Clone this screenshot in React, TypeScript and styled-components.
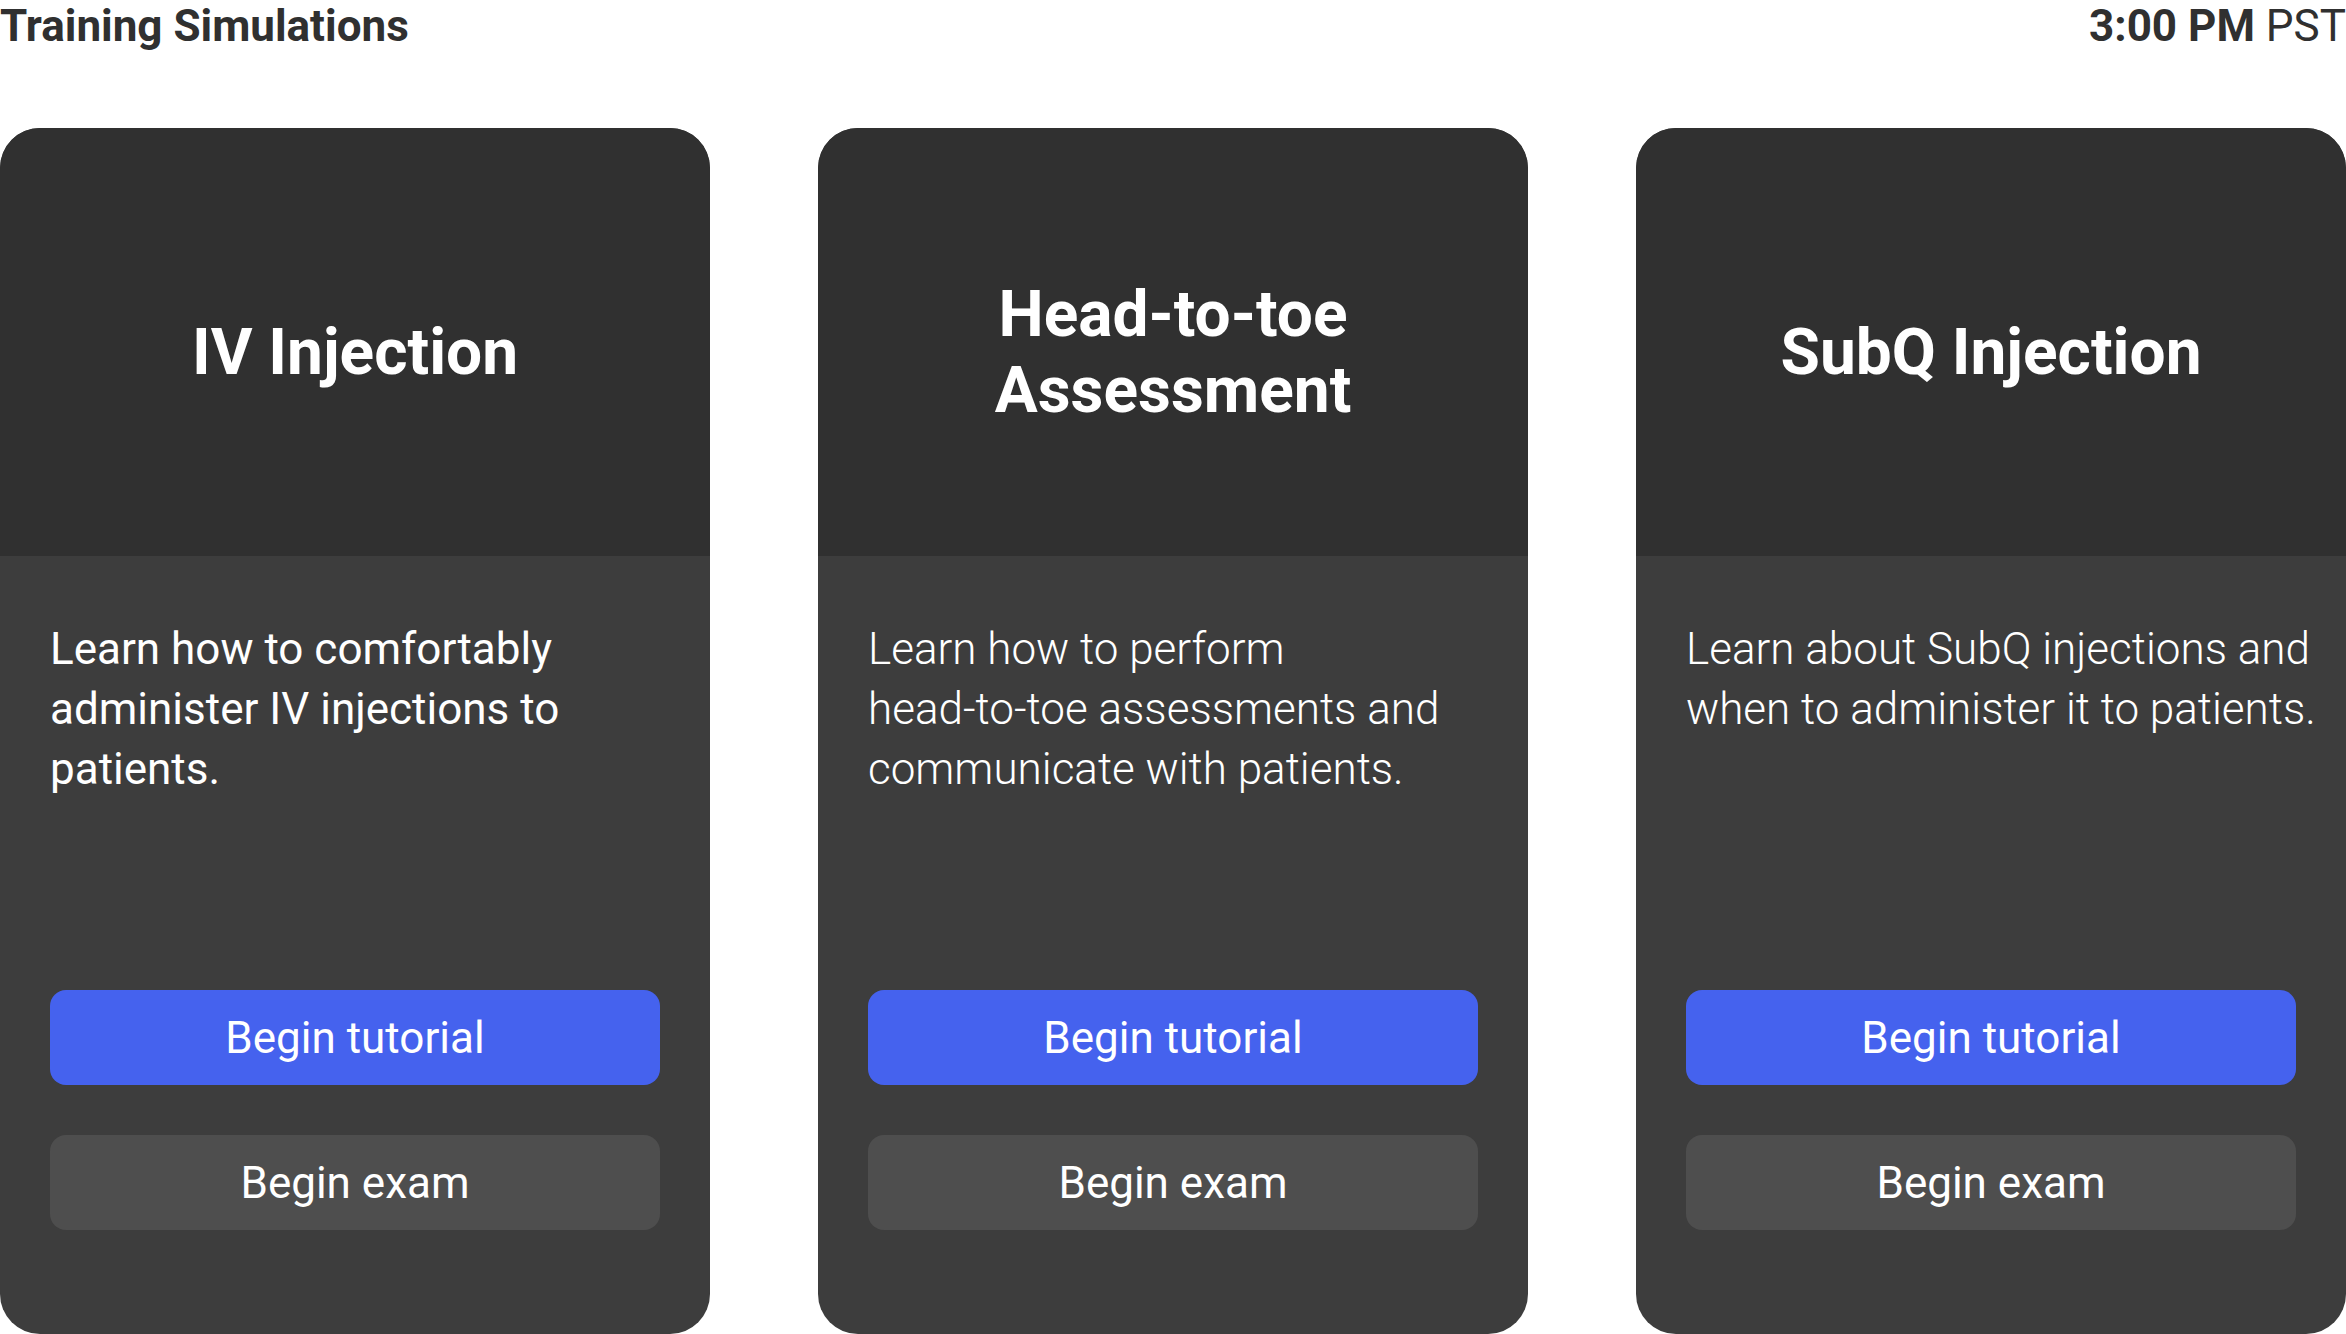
import React from "react";
import styled, { createGlobalStyle } from "styled-components";

const GlobalStyle = createGlobalStyle`
  html, body {
    margin: 0;
    padding: 0;
    background: #ffffff;
    font-family: Roboto, "Liberation Sans", Arial, sans-serif;
  }
  * {
    box-sizing: border-box;
  }
`;

const Page = styled.div`
  width: 2346px;
  height: 1334px;
  display: flex;
  flex-direction: column;
  overflow: hidden;
`;

const TopBar = styled.header`
  display: flex;
  justify-content: space-between;
  align-items: flex-start;
  height: 128px;
  font-size: 44px;
  line-height: 52px;
  color: #303030;
`;

const PageTitle = styled.h1`
  margin: 0;
  font-size: 44px;
  font-weight: 700;
  line-height: 52px;
`;

const Clock = styled.div`
  font-weight: 400;

  b {
    font-weight: 700;
  }
`;

const CardGrid = styled.div`
  flex: 1;
  display: grid;
  grid-template-columns: repeat(3, 1fr);
  gap: 108px;
`;

const Card = styled.section`
  display: flex;
  flex-direction: column;
  border-radius: 40px;
  overflow: hidden;
  background: #3d3d3d;
`;

const CardHead = styled.div`
  height: 428px;
  display: flex;
  align-items: center;
  justify-content: center;
  background: #303030;
  padding: 22px 40px 0;
`;

const CardTitle = styled.h2`
  margin: 0;
  color: #ffffff;
  font-size: 64px;
  font-weight: 700;
  line-height: 76px;
  text-align: center;
`;

const CardBody = styled.div`
  flex: 1;
  display: flex;
  flex-direction: column;
  padding: 63px 24px 104px 50px;
`;

const Description = styled.p<{ $weight: number }>`
  margin: 0;
  color: #ffffff;
  font-size: 44px;
  line-height: 60px;
  font-weight: ${(p) => p.$weight};
`;

const Actions = styled.div`
  margin-top: auto;
  margin-right: 26px;
  display: flex;
  flex-direction: column;
  gap: 50px;
`;

const ActionButton = styled.button<{ $primary?: boolean }>`
  height: 95px;
  border: none;
  border-radius: 16px;
  background: ${(p) => (p.$primary ? "#4562ee" : "#4e4e4e")};
  color: #ffffff;
  font-family: Roboto, "Liberation Sans", Arial, sans-serif;
  font-size: 44px;
  font-weight: 400;
  cursor: pointer;
`;

const simulations = [
  {
    title: "IV Injection",
    text: "Learn how to comfortably administer IV injections to patients.",
    weight: 400,
  },
  {
    title: (
      <>
        Head-to-toe
        <br />
        Assessment
      </>
    ),
    text: (
      <>
        Learn how to perform
        <br />
        head-to-toe assessments and communicate with patients.
      </>
    ),
    weight: 300,
  },
  {
    title: "SubQ Injection",
    text: "Learn about SubQ injections and when to administer it to patients.",
    weight: 300,
  },
];

const App = () => {
  return (
    <>
      <GlobalStyle />
      <Page>
        <TopBar>
          <PageTitle>Training Simulations</PageTitle>
          <Clock>
            <b>3:00 PM</b> PST
          </Clock>
        </TopBar>
        <CardGrid>
          {simulations.map((sim, i) => (
            <Card key={i}>
              <CardHead>
                <CardTitle>{sim.title}</CardTitle>
              </CardHead>
              <CardBody>
                <Description $weight={sim.weight}>{sim.text}</Description>
                <Actions>
                  <ActionButton $primary>Begin tutorial</ActionButton>
                  <ActionButton>Begin exam</ActionButton>
                </Actions>
              </CardBody>
            </Card>
          ))}
        </CardGrid>
      </Page>
    </>
  );
};

export default App;
